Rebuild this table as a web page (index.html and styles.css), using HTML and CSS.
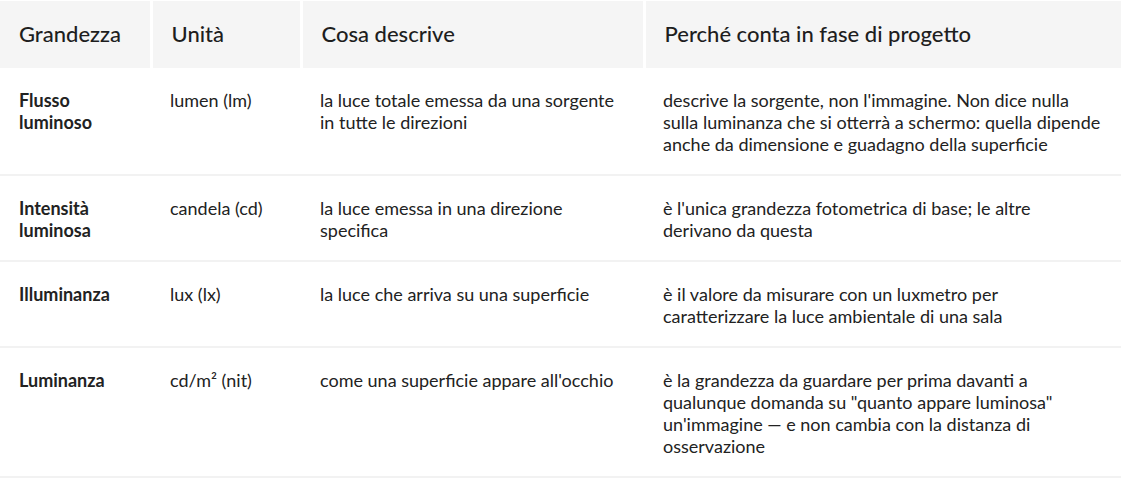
FILE: index.html
```html
<!DOCTYPE html>
<html lang="it">
<head>
<meta charset="utf-8">
<title>Grandezze fotometriche</title>
<link rel="stylesheet" href="styles.css">
</head>
<body>
<table class="photo-table">
  <colgroup>
    <col class="c1"><col class="c2"><col class="c3"><col class="c4">
  </colgroup>
  <thead>
    <tr>
      <th>Grandezza</th>
      <th>Unità</th>
      <th>Cosa descrive</th>
      <th>Perché conta in fase di progetto</th>
    </tr>
  </thead>
  <tbody>
    <tr>
      <td class="name">Flusso<br>luminoso</td>
      <td>lumen (lm)</td>
      <td>la luce totale emessa da una sorgente in tutte le direzioni</td>
      <td>descrive la sorgente, non l'immagine. Non dice nulla sulla luminanza che si otterrà a schermo: quella dipende anche da dimensione e guadagno della superficie</td>
    </tr>
    <tr>
      <td class="name">Intensità<br>luminosa</td>
      <td>candela (cd)</td>
      <td>la luce emessa in una direzione specifica</td>
      <td>è l'unica grandezza fotometrica di base; le altre derivano da questa</td>
    </tr>
    <tr>
      <td class="name">Illuminanza</td>
      <td>lux (lx)</td>
      <td>la luce che arriva su una superficie</td>
      <td>è il valore da misurare con un luxmetro per caratterizzare la luce ambientale di una sala</td>
    </tr>
    <tr>
      <td class="name">Luminanza</td>
      <td>cd/m² (nit)</td>
      <td>come una superficie appare all'occhio</td>
      <td>è la grandezza da guardare per prima davanti a qualunque domanda su "quanto appare luminosa" un'immagine — e non cambia con la distanza di osservazione</td>
    </tr>
  </tbody>
</table>
</body>
</html>
```

FILE: styles.css
```css
html, body {
  margin: 0;
  padding: 0;
  background: #ffffff;
}

body {
  font-family: Lato, "Noto Sans", "Liberation Sans", sans-serif;
  color: #222222;
  padding-top: 1px;
}

.photo-table {
  border-collapse: collapse;
  width: 1122px;
  table-layout: fixed;
}

.c1 { width: 151px; }
.c2 { width: 150px; }
.c3 { width: 343px; }
.c4 { width: 478px; }

.photo-table th {
  background: #f5f5f5;
  border-right: 3px solid #ffffff;
  height: 66px;
  padding: 0 20px 1px 19px;
  text-align: left;
  font-weight: 500;
  font-size: 22px;
  line-height: 26px;
  vertical-align: middle;
  color: #1e1e1e;
}

.photo-table tbody tr {
  border-bottom: 2px solid #f2f2f2;
}

.photo-table td {
  padding: 21px 20px 19px 19px;
  vertical-align: top;
  font-size: 18px;
  line-height: 22px;
  font-weight: 400;
}

.photo-table td.name {
  font-weight: 700;
}
```
